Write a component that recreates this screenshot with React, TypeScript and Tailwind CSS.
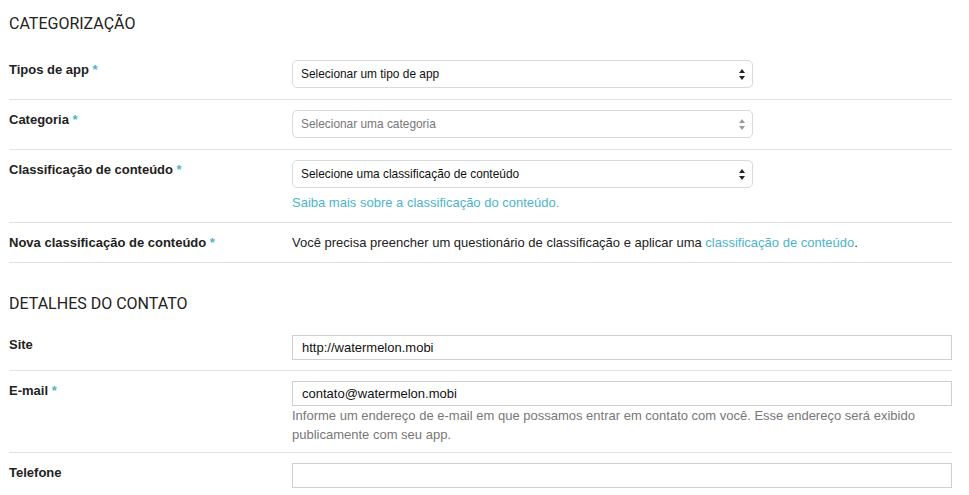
import React from "react";

const Arrows = ({ muted }: { muted?: boolean }) => (
  <svg width="6" height="11" viewBox="0 0 6 11" className="shrink-0">
    <path d="M3 0 L6 4 L0 4 Z" fill={muted ? "#9a9a9a" : "#222"} />
    <path d="M0 7 L6 7 L3 11 Z" fill={muted ? "#9a9a9a" : "#222"} />
  </svg>
);

const Select = ({ text, muted }: { text: string; muted?: boolean }) => (
  <div className="flex h-[28px] w-[461px] items-center justify-between rounded-[5px] border border-[#d9d9d9] bg-white pl-[8px] pr-[7px]">
    <span className={`pt-[2px] text-[11.9px] ${muted ? "text-[#777]" : "text-[#111]"}`}>{text}</span>
    <Arrows muted={muted} />
  </div>
);

const Input = ({ value }: { value?: string }) => (
  <div className="flex h-[25px] w-full items-center border border-[#cfcfcf] bg-white pl-[9px] text-[13px] text-[#111]">
    {value}
  </div>
);

const Star = () => <span className="text-[#4cb4ca]"> *</span>;

const Row = ({
  label,
  req,
  children,
  last,
  pb,
}: {
  label: string;
  req?: boolean;
  children: React.ReactNode;
  last?: boolean;
  pb: string;
}) => (
  <div className={`flex pt-[10px] ${pb} ${last ? "" : "border-b border-[#e2e2e2]"}`}>
    <div className="w-[283px] shrink-0 text-[13px] font-bold leading-[19px] text-[#222]">
      {label}
      {req && <Star />}
    </div>
    <div className="flex-1">{children}</div>
  </div>
);

export default function App() {
  return (
    <div
      className="h-[495px] w-[969px] overflow-hidden bg-white pl-[9px]"
      style={{ fontFamily: '"Liberation Sans", Arial, sans-serif' }}
    >
      <div className="w-[943px]">
        <h2
          className="pt-[14px] pb-[16px] text-[16px] leading-[20px] text-[#222]"
          style={{ fontFamily: 'Roboto, "Liberation Sans", sans-serif' }}
        >
          CATEGORIZAÇÃO
        </h2>
        <Row label="Tipos de app" req pb="pb-[11px]">
          <Select text="Selecionar um tipo de app" />
        </Row>
        <Row label="Categoria" req pb="pb-[11px]">
          <Select text="Selecionar uma categoria" muted />
        </Row>
        <div className="flex border-b border-[#e2e2e2] pt-[10px] pb-[9px]">
          <div className="w-[283px] shrink-0 text-[13px] font-bold leading-[19px] text-[#222]">
            Classificação de conteúdo
            <Star />
          </div>
          <div className="flex-1">
            <Select text="Selecione uma classificação de conteúdo" />
            <div className="pt-[5px] text-[13px] leading-[20px] text-[#4cb4ca]">
              Saiba mais sobre a classificação do conteúdo.
            </div>
          </div>
        </div>
        <div className="flex border-b border-[#e2e2e2] pt-[10px] pb-[9px]">
          <div className="w-[283px] shrink-0 text-[13px] font-bold leading-[20px] text-[#222]">
            Nova classificação de conteúdo
            <Star />
          </div>
          <div className="flex-1 text-[13px] leading-[20px] text-[#222]">
            Você precisa preencher um questionário de classificação e aplicar uma{" "}
            <span className="text-[#4cb4ca]">classificação de conteúdo</span>.
          </div>
        </div>
        <h2
          className="pt-[31px] pb-[11px] text-[16px] leading-[20px] text-[#222]"
          style={{ fontFamily: 'Roboto, "Liberation Sans", sans-serif' }}
        >
          DETALHES DO CONTATO
        </h2>
        <Row label="Site" pb="pb-[10px]">
          <Input value="http://watermelon.mobi" />
        </Row>
        <div className="flex border-b border-[#e2e2e2] pt-[10px] pb-[8px]">
          <div className="w-[283px] shrink-0 text-[13px] font-bold leading-[19px] text-[#222]">
            E-mail
            <Star />
          </div>
          <div className="flex-1">
            <Input value="contato@watermelon.mobi" />
            <div className="text-[13px] leading-[19px] text-[#777]">
              Informe um endereço de e-mail em que possamos entrar em contato com você. Esse endereço
              será exibido publicamente com seu app.
            </div>
          </div>
        </div>
        <Row label="Telefone" last pb="pb-[10px]">
          <Input />
        </Row>
      </div>
    </div>
  );
}
